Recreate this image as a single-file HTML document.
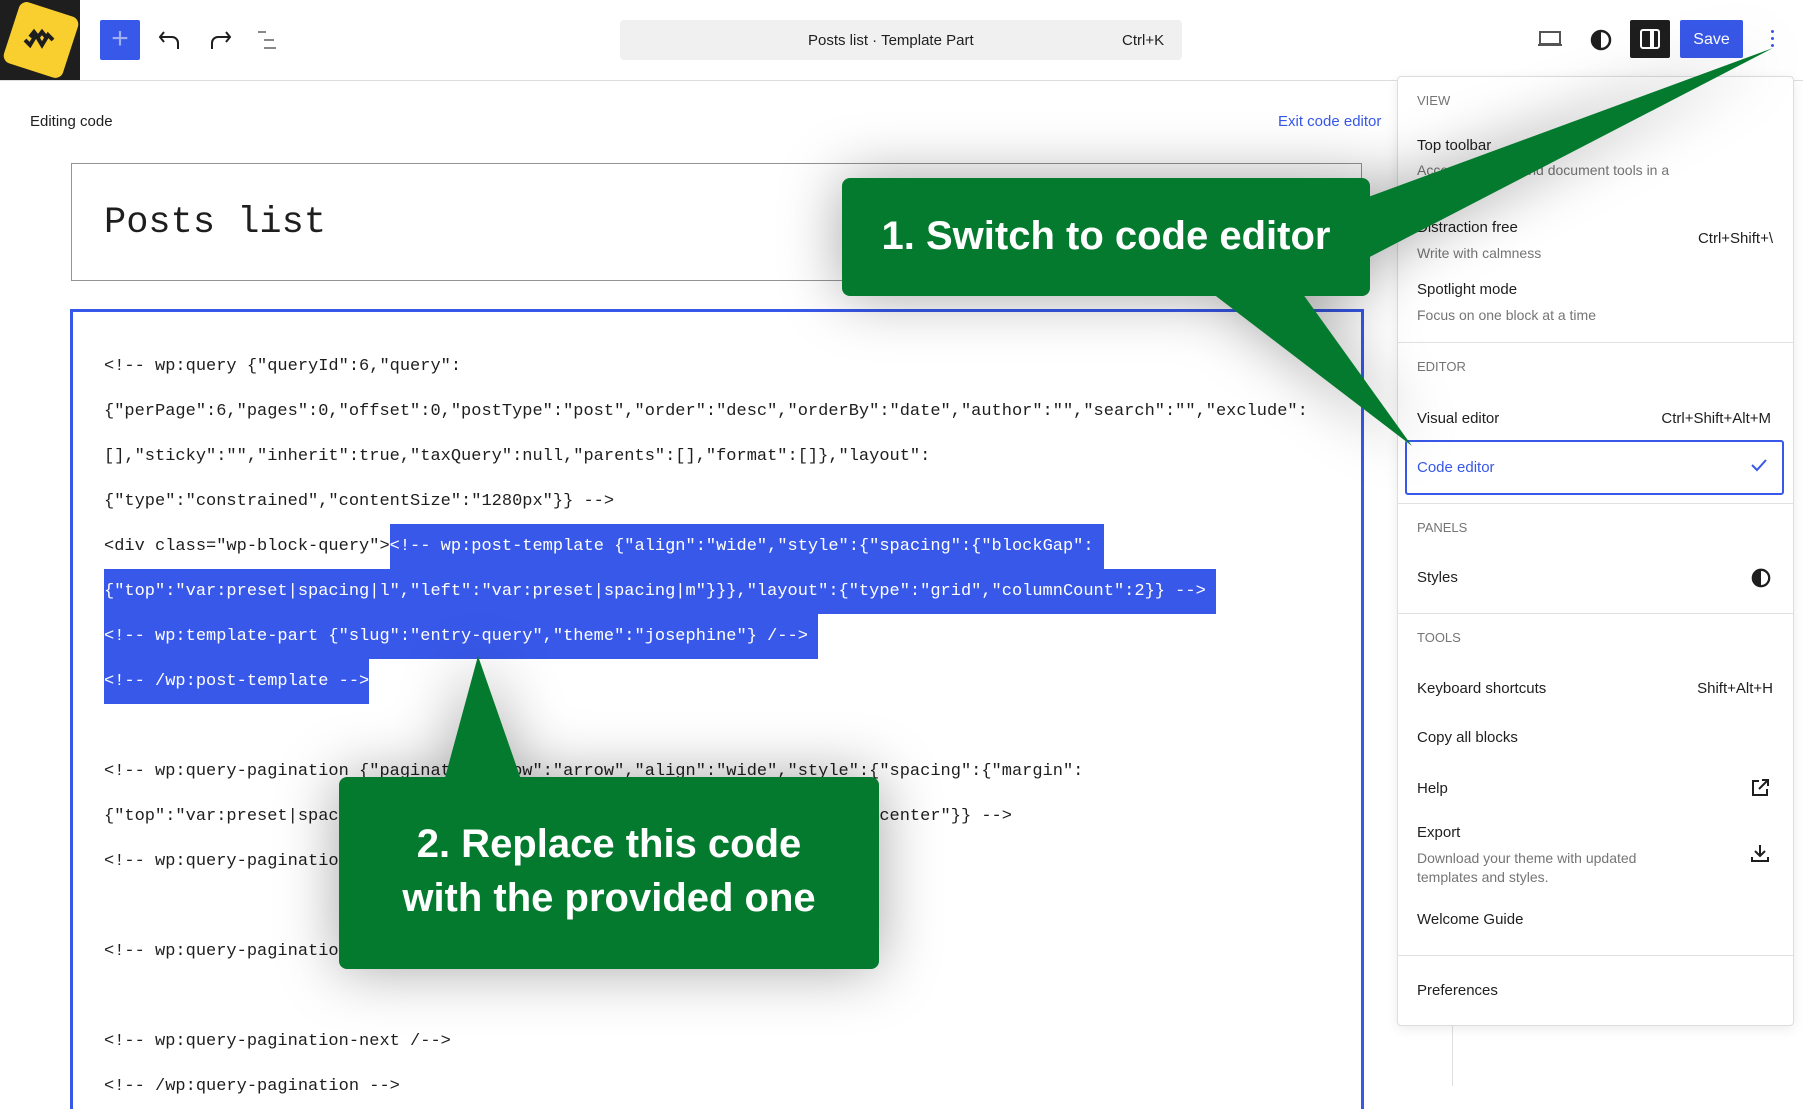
<!DOCTYPE html>
<html><head><meta charset="utf-8"><style>
*{margin:0;padding:0;box-sizing:border-box}
body{width:1803px;height:1084px;overflow:hidden;background:#fff;font-family:"Liberation Sans",sans-serif;position:relative;color:#1e1e1e}
.a{position:absolute;white-space:nowrap}
.code{position:absolute;left:104px;top:344px;font-family:"Liberation Mono",monospace;font-size:17px;color:#1e1e1e}
.code div{height:45px;line-height:45px;white-space:pre}
.sel{background:#3858e9;color:#fff;display:inline-block;height:45px}
.m{position:absolute;left:1417px;font-size:15px;line-height:20px;color:#1e1e1e;white-space:nowrap}
.h{font-size:13px;color:#757575}
.d{font-size:14px;color:#757575}
.r{position:absolute;right:30px;font-size:15px;line-height:20px;white-space:nowrap}
.div{position:absolute;left:1397px;width:397px;height:1px;background:#e0e0e0}
</style></head><body>
<!-- top bar -->
<div class="a" style="left:0;top:0;width:80px;height:80px;background:#1e1e1e"></div>
<div class="a" style="left:10px;top:8px;width:62px;height:64px;background:#f9cf2f;border-radius:8px;transform:rotate(18deg)"></div>
<svg class="a" style="left:22px;top:28px" width="36" height="24" viewBox="0 0 36 24"><path d="M3 12l5 5 6-10 6 10 6-10 5 5M8 9l4-5 4 5 4-5 4 5" fill="none" stroke="#1e1e1e" stroke-width="4"/></svg>
<div class="a" style="left:0;top:80px;width:1803px;height:1px;background:#ddd"></div>
<div class="a" style="left:100px;top:20px;width:40px;height:40px;background:#3858e9;border-radius:2px;color:#9fb0f5;font-size:30px;line-height:38px;text-align:center">+</div>
<svg class="a" style="left:158px;top:28px" width="26" height="24" viewBox="0 0 26 24"><path d="M6 4L2 9l4 5M2 9h12a6 6 0 0 1 6 6v6" fill="none" stroke="#1e1e1e" stroke-width="2"/></svg>
<svg class="a" style="left:206px;top:28px" width="26" height="24" viewBox="0 0 26 24"><path d="M20 4l4 5-4 5M24 9H12a6 6 0 0 0-6 6v6" fill="none" stroke="#1e1e1e" stroke-width="2"/></svg>
<svg class="a" style="left:256px;top:30px" width="28" height="20" viewBox="0 0 28 20"><path d="M2 2h8M8 10h10M8 18h12" stroke="#888" stroke-width="2"/></svg>
<div class="a" style="left:620px;top:20px;width:562px;height:40px;background:#f0f0f0;border-radius:4px"></div>
<div class="a" style="left:808px;top:32px;font-size:15px">Posts list · Template Part</div>
<div class="a" style="left:1122px;top:32px;font-size:15px">Ctrl+K</div>
<svg class="a" style="left:1537px;top:30px" width="26" height="18" viewBox="0 0 26 18"><path d="M3 2h20v12H3zM1 15h24" fill="none" stroke="#555" stroke-width="2"/></svg>
<svg class="a" style="left:1590px;top:29px" width="22" height="22" viewBox="0 0 22 22"><circle cx="11" cy="11" r="9" fill="none" stroke="#1e1e1e" stroke-width="2.5"/><path d="M11 2a9 9 0 0 0 0 18z" fill="#1e1e1e"/></svg>
<div class="a" style="left:1630px;top:20px;width:40px;height:38px;background:#1e1e1e;border-radius:2px"></div>
<svg class="a" style="left:1639px;top:28px" width="22" height="22" viewBox="0 0 22 22"><rect x="2" y="2" width="18" height="18" rx="2" fill="none" stroke="#fff" stroke-width="2"/><path d="M13 2v18" stroke="#fff" stroke-width="4"/></svg>
<div class="a" style="left:1680px;top:20px;width:63px;height:38px;background:#3858e9;border-radius:2px;color:#fff;font-size:16px;line-height:40px;text-align:center">Save</div>
<div class="a" style="left:1771px;top:30px;width:3px;height:3px;background:#3858e9;border-radius:2px;box-shadow:0 7px 0 #3858e9,0 14px 0 #3858e9"></div>

<!-- editor -->
<div class="a" style="left:30px;top:113px;font-size:15px">Editing code</div>
<div class="a" style="left:1278px;top:113px;font-size:15px;color:#3858e9">Exit code editor</div>
<div class="a" style="left:71px;top:163px;width:1291px;height:118px;border:1px solid #949494"></div>
<div class="a" style="left:104px;top:200px;font-family:'Liberation Mono',monospace;font-size:37px;line-height:46px">Posts list</div>
<div class="a" style="left:70px;top:309px;width:1294px;height:800px;border:3px solid #3858e9;border-bottom:none"></div>
<div class="code">
<div>&lt;!-- wp:query {"queryId":6,"query":</div>
<div>{"perPage":6,"pages":0,"offset":0,"postType":"post","order":"desc","orderBy":"date","author":"","search":"","exclude":</div>
<div>[],"sticky":"","inherit":true,"taxQuery":null,"parents":[],"format":[]},"layout":</div>
<div>{"type":"constrained","contentSize":"1280px"}} --&gt;</div>
<div>&lt;div class="wp-block-query"&gt;<span class="sel">&lt;!-- wp:post-template {"align":"wide","style":{"spacing":{"blockGap": </span></div>
<div><span class="sel">{"top":"var:preset|spacing|l","left":"var:preset|spacing|m"}}},"layout":{"type":"grid","columnCount":2}} --&gt; </span></div>
<div><span class="sel">&lt;!-- wp:template-part {"slug":"entry-query","theme":"josephine"} /--&gt; </span></div>
<div><span class="sel">&lt;!-- /wp:post-template --&gt;</span></div>
<div> </div>
<div>&lt;!-- wp:query-pagination {"paginationArrow":"arrow","align":"wide","style":{"spacing":{"margin":</div>
<div>{"top":"var:preset|spacing|l"}}},"layout":{"type":"flex","justifyContent": "center"}} --&gt;</div>
<div>&lt;!-- wp:query-pagination-previous /--&gt;</div>
<div> </div>
<div>&lt;!-- wp:query-pagination-numbers /--&gt;</div>
<div> </div>
<div>&lt;!-- wp:query-pagination-next /--&gt;</div>
<div>&lt;!-- /wp:query-pagination --&gt;</div>
</div>
<div class="a" style="left:1452px;top:1026px;width:1px;height:60px;background:#e0e0e0"></div>

<!-- menu -->
<div class="a" style="left:1397px;top:76px;width:397px;height:950px;background:#fff;border:1px solid #ddd;border-radius:4px;box-shadow:0 3px 12px rgba(0,0,0,.08)"></div>
<div class="m h" style="top:91px">VIEW</div>
<div class="m" style="top:136px">Top toolbar</div>
<div class="m d" style="top:160px">Access all block and document tools in a</div>
<div class="m" style="top:218px">Distraction free</div>
<div class="m d" style="top:243px">Write with calmness</div>
<div class="r" style="top:229px;right:30px">Ctrl+Shift+\</div>
<div class="m" style="top:280px">Spotlight mode</div>
<div class="m d" style="top:305px">Focus on one block at a time</div>
<div class="div" style="top:342px"></div>
<div class="m h" style="top:357px">EDITOR</div>
<div class="m" style="top:409px">Visual editor</div>
<div class="r" style="top:409px;right:32px">Ctrl+Shift+Alt+M</div>
<div class="a" style="left:1405px;top:440px;width:379px;height:55px;border:2px solid #3858e9;border-radius:3px"></div>
<div class="m" style="top:458px;color:#3858e9">Code editor</div>
<svg class="a" style="left:1751px;top:458px" width="16" height="14" viewBox="0 0 16 14"><path d="M1 7l5 5L15 2" fill="none" stroke="#3858e9" stroke-width="2"/></svg>
<div class="div" style="top:503px"></div>
<div class="m h" style="top:518px">PANELS</div>
<div class="m" style="top:568px">Styles</div>
<svg class="a" style="left:1751px;top:568px" width="20" height="20" viewBox="0 0 22 22"><circle cx="11" cy="11" r="9" fill="none" stroke="#1e1e1e" stroke-width="2.5"/><path d="M11 2a9 9 0 0 0 0 18z" fill="#1e1e1e"/></svg>
<div class="div" style="top:613px"></div>
<div class="m h" style="top:628px">TOOLS</div>
<div class="m" style="top:679px">Keyboard shortcuts</div>
<div class="r" style="top:679px;right:30px">Shift+Alt+H</div>
<div class="m" style="top:728px">Copy all blocks</div>
<div class="m" style="top:779px">Help</div>
<svg class="a" style="left:1750px;top:778px" width="20" height="20" viewBox="0 0 20 20"><path d="M9 3H3v14h14v-6M12 2h6v6M18 2l-9 9" fill="none" stroke="#1e1e1e" stroke-width="2"/></svg>
<div class="m" style="top:823px">Export</div>
<div class="m d" style="top:848px">Download your theme with updated</div>
<div class="m d" style="top:867px">templates and styles.</div>
<svg class="a" style="left:1750px;top:843px" width="20" height="20" viewBox="0 0 20 20"><path d="M10 2v11M5 8l5 5 5-5M2 14v4h16v-4" fill="none" stroke="#1e1e1e" stroke-width="2"/></svg>
<div class="m" style="top:910px">Welcome Guide</div>
<div class="div" style="top:955px"></div>
<div class="m" style="top:981px">Preferences</div>

<!-- callouts -->
<svg class="a" style="left:0;top:0;filter:drop-shadow(0 0 30px rgba(0,0,0,.35))" width="1803" height="1084">
<g fill="#037a2d">
<rect x="842" y="178" width="528" height="118" rx="8"/>
<polygon points="1360,200 1773,48 1360,262"/>
<polygon points="1208,290 1300,290 1412,446"/>
<rect x="339" y="777" width="540" height="192" rx="8"/>
<polygon points="443,785 523,785 478,656"/>
</g>
</svg>
<div class="a" style="left:842px;top:208px;width:528px;text-align:center;color:#fff;font-weight:bold;font-size:40px;line-height:56px">1. Switch to code editor</div>
<div class="a" style="left:339px;top:817px;width:540px;text-align:center;color:#fff;font-weight:bold;font-size:40px;line-height:54px;white-space:normal">2. Replace this code<br>with the provided one</div>
</body></html>
